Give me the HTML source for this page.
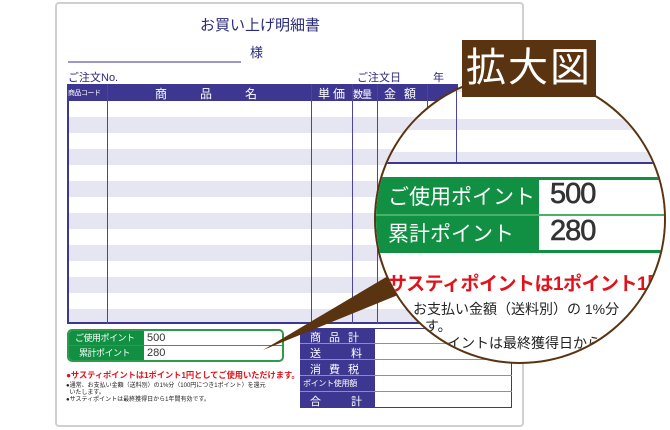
<!DOCTYPE html>
<html><head><meta charset="utf-8"><style>
*{margin:0;padding:0;box-sizing:border-box}
body{width:670px;height:430px;background:#fff;position:relative;overflow:hidden;font-family:"Liberation Sans","Noto Sans CJK JP",sans-serif;color:#2a2a7a}
.a{position:absolute}
.paper{left:55px;top:2px;width:469px;height:425px;border:2px solid #d0d0d0;border-radius:4px;background:#fff}
.th{background:#3d3791;color:#fff;font-size:11px;text-align:center;line-height:16px;height:17px}
.vl{width:1px;background:#4b45a0}
</style></head><body>
<div class="a paper"></div>
<div class="a" style="left:200px;top:14px;font-size:15px;color:#2a2a7a">お買い上げ明細書</div>
<div class="a" style="left:250px;top:42px;font-size:13px">様</div>
<div class="a" style="left:68px;top:61px;width:173px;height:2px;background:#9c97cc"></div>
<div class="a" style="left:68px;top:69px;font-size:11px">ご注文No.</div>
<div class="a" style="left:357px;top:69px;font-size:11px">ご注文日</div>
<div class="a" style="left:433px;top:69px;font-size:11px">年</div>
<div class="a" style="left:67px;top:84px;width:391px;height:240px;border:2px solid #3d3791;background:#fff"></div>
<div class="a th" style="left:67px;top:84px;width:391px"></div>
<div class="a" style="left:68px;top:88px;font-size:7px;color:#fff;letter-spacing:-0.5px;white-space:nowrap">商品コード</div>
<div class="a" style="left:155px;top:85px;font-size:12px;color:#fff;letter-spacing:33px">商品名</div>
<div class="a" style="left:318px;top:85px;font-size:12px;color:#fff;letter-spacing:3px">単価</div>
<div class="a" style="left:353px;top:86px;font-size:10px;color:#fff;letter-spacing:-1px">数量</div>
<div class="a" style="left:384px;top:85px;font-size:12px;color:#fff;letter-spacing:8px">金額</div>
<div class="a" style="left:69px;top:117px;width:387px;height:205px;background:repeating-linear-gradient(#e6e5f2 0 16px,#fff 16px 32px)"></div>
<div class="a vl" style="left:107px;top:84px;height:240px"></div>
<div class="a vl" style="left:311px;top:84px;height:240px"></div>
<div class="a vl" style="left:352px;top:84px;height:240px"></div>
<div class="a vl" style="left:377px;top:84px;height:240px"></div>
<div class="a vl" style="left:427px;top:84px;height:240px"></div>
<div class="a" style="left:67px;top:329px;width:217px;height:33px;border:2px solid #2e9a4b;border-radius:5px;overflow:hidden;background:#fff">
<div style="position:absolute;left:0;top:0;width:75px;height:29px;background:#119043"></div>
<div style="position:absolute;left:0;top:14px;width:213px;height:1px;background:#2e9a4b"></div>
<div style="position:absolute;left:6px;top:1px;font-size:9px;color:#fff;line-height:12px;white-space:nowrap;letter-spacing:-0.5px">ご使用ポイント</div>
<div style="position:absolute;left:10px;top:16px;font-size:9px;color:#fff;line-height:12px;white-space:nowrap;letter-spacing:-0.5px">累計ポイント</div>
<div style="position:absolute;left:78px;top:0;font-size:11px;color:#333;line-height:14px">500</div>
<div style="position:absolute;left:78px;top:15px;font-size:11px;color:#333;line-height:14px">280</div>
</div>
<div class="a" style="left:66px;top:369px;font-size:8.3px;color:#e0121b;font-weight:bold;white-space:nowrap;letter-spacing:-0.1px">●サスティポイントは1ポイント1円としてご使用いただけます。</div>
<div class="a" style="left:66px;top:383px;font-size:6px;color:#222;line-height:7px;width:220px">●通常、お支払い金額（送料別）の1%分（100円につき1ポイント）を還元<br>&nbsp;&nbsp;いたします。<br>●サスティポイントは最終獲得日から1年間有効です。</div>
<div class="a" style="left:300px;top:328px;width:212px;height:80px;border:1px solid #3d3791;background:#fff"></div>
<div class="a" style="left:300px;top:328px;width:75px;height:80px;background:#3d3791"></div>
<div class="a" style="left:300px;top:343px;width:212px;height:1px;background:#8e89c8"></div>
<div class="a" style="left:300px;top:359px;width:212px;height:1px;background:#8e89c8"></div>
<div class="a" style="left:300px;top:375px;width:212px;height:1px;background:#8e89c8"></div>
<div class="a" style="left:300px;top:391px;width:212px;height:1px;background:#8e89c8"></div>
<div class="a" style="left:310px;top:329px;font-size:11px;color:#fff;letter-spacing:8px">商品計</div>
<div class="a" style="left:310px;top:345px;font-size:11px;color:#fff;letter-spacing:30px">送料</div>
<div class="a" style="left:310px;top:361px;font-size:11px;color:#fff;letter-spacing:8px">消費税</div>
<div class="a" style="left:303px;top:378px;font-size:8px;color:#fff;white-space:nowrap;letter-spacing:-0.3px">ポイント使用額</div>
<div class="a" style="left:310px;top:393px;font-size:11px;color:#fff;letter-spacing:30px">合計</div>
<svg class="a" style="left:0;top:0" width="670" height="430"><polygon points="263,350 388,276 398,295" fill="#5a3310"/></svg>
<div class="a" style="left:374px;top:74px;width:292px;height:290px;border-radius:50%;border:2px solid #5a3310;overflow:hidden;background:#fff">
 <div style="position:absolute;left:0;top:10px;width:300px;height:6px;background:#e6e5f2"></div>
 <div style="position:absolute;left:0;top:43px;width:300px;height:11px;background:#e6e5f2"></div>
 <div style="position:absolute;left:0;top:76px;width:300px;height:10px;background:#e6e5f2"></div>
 <div style="position:absolute;left:80px;top:0;width:1px;height:88px;background:#4b45a0"></div>
 <div style="position:absolute;left:0;top:86px;width:300px;height:2px;background:#3d3791"></div>
 <div style="position:absolute;left:0;top:101px;width:300px;height:76px;background:#119043"></div>
 <div style="position:absolute;left:163px;top:104px;width:140px;height:34px;background:#fff"></div>
 <div style="position:absolute;left:163px;top:140px;width:140px;height:34px;background:#fff"></div>
 <div style="position:absolute;left:0;top:138px;width:300px;height:2px;background:#4bb068"></div>
 <div style="position:absolute;left:12px;top:105px;font-size:21px;color:#fff;white-space:nowrap">ご使用ポイント</div>
 <div style="position:absolute;left:12px;top:142px;font-size:21px;color:#fff;white-space:nowrap">累計ポイント</div>
 <div style="position:absolute;left:174px;top:102px;font-size:29px;color:#333;letter-spacing:-1px;-webkit-text-stroke:0.6px #333">500</div>
 <div style="position:absolute;left:174px;top:139px;font-size:29px;color:#333;letter-spacing:-1px;-webkit-text-stroke:0.6px #333">280</div>
 <div style="position:absolute;left:12px;top:193px;font-size:19px;color:#e0121b;font-weight:bold;white-space:nowrap;letter-spacing:-0.5px">サスティポイントは1ポイント1円と</div>
 <div style="position:absolute;left:37px;top:223px;font-size:14px;color:#222;white-space:nowrap">お支払い金額（送料別）の 1%分</div>
 <div style="position:absolute;left:49px;top:240px;font-size:14px;color:#222;white-space:nowrap">す。</div>
 <div style="position:absolute;left:71px;top:257px;font-size:14px;color:#222;white-space:nowrap">イントは最終獲得日から</div>
</div>
<div class="a" style="left:462px;top:40px;width:134px;height:57px;background:#5a3310;color:#fff;font-size:40px;line-height:57px;text-align:center;letter-spacing:2px">拡大図</div>
</body></html>
